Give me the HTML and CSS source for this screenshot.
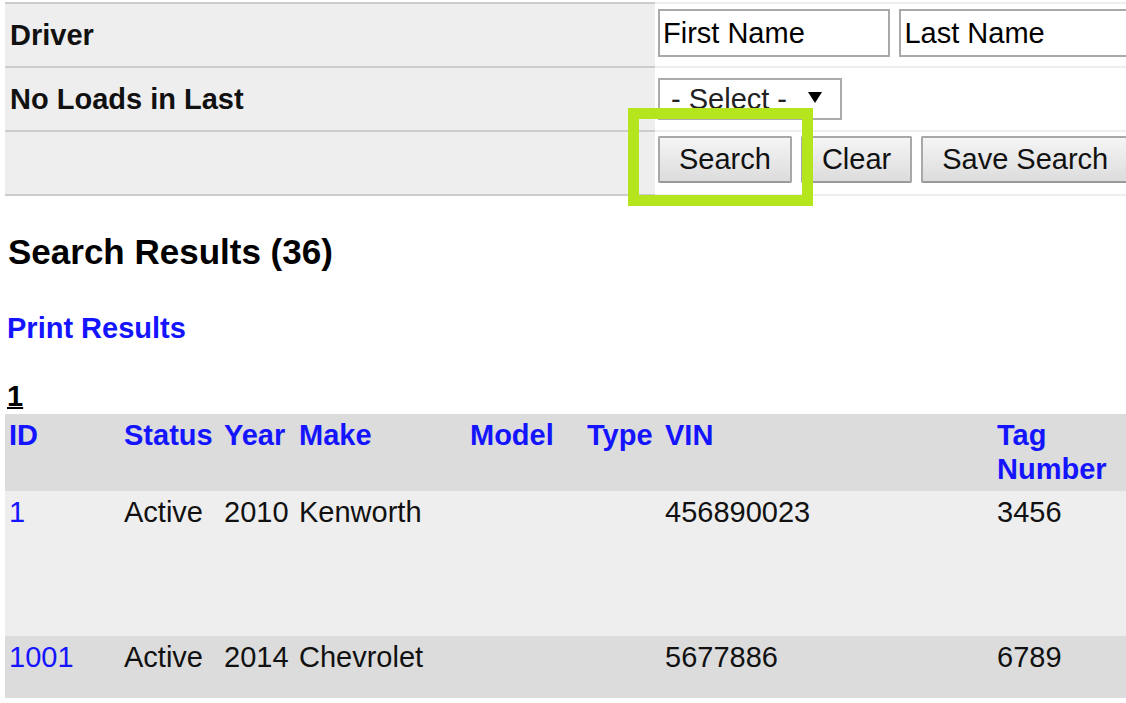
FILE: index.html
```html
<!DOCTYPE html>
<html>
<head>
    <meta charset="utf-8" />
    <title>Equipment Search</title>
    <link rel="stylesheet" href="styles.css">
</head>
<body>
    <div class="page">
        <form action="#" method="get">
            <table class="criteria">
                <tr>
                    <th>Driver</th>
                    <td>
                        <input class="txt" type="text" name="first" placeholder="First Name" />
                        <input class="txt" type="text" name="last" placeholder="Last Name" />
                    </td>
                </tr>
                <tr>
                    <th>No Loads in Last</th>
                    <td>
                        <span class="sel-wrap">
                            <select class="sel" name="period">
                                <option>- Select -</option>
                                <option>30 Days</option>
                                <option>60 Days</option>
                                <option>90 Days</option>
                            </select>
                            <span class="sel-arrow"></span>
                        </span>
                    </td>
                </tr>
                <tr>
                    <th></th>
                    <td>
                        <div class="btns">
                            <input class="btn" type="submit" value="Search" />
                            <input class="btn" type="reset" value="Clear" />
                            <input class="btn" type="button" value="Save Search" />
                        </div>
                    </td>
                </tr>
            </table>
        </form>

        <!-- marker drawn around the search button -->
        <div class="mark"></div>

        <h3 class="res-title">Search Results (36)</h3>
        <a class="print" href="#">Print Results</a>
        <div class="pager"><a href="#">1</a></div>

        <table class="results">
            <colgroup>
                <col class="c-id" />
                <col class="c-status" />
                <col class="c-year" />
                <col class="c-make" />
                <col class="c-model" />
                <col class="c-type" />
                <col class="c-vin" />
                <col class="c-tag" />
            </colgroup>
            <tr class="head">
                <th><a href="#">ID</a></th>
                <th><a href="#">Status</a></th>
                <th><a href="#">Year</a></th>
                <th><a href="#">Make</a></th>
                <th><a href="#">Model</a></th>
                <th><a href="#">Type</a></th>
                <th><a href="#">VIN</a></th>
                <th><a href="#">Tag Number</a></th>
            </tr>
            <tr class="row1">
                <td><a href="#">1</a></td>
                <td>Active</td>
                <td>2010</td>
                <td>Kenworth</td>
                <td></td>
                <td></td>
                <td>456890023</td>
                <td>3456</td>
            </tr>
            <tr class="row2">
                <td><a href="#">1001</a></td>
                <td>Active</td>
                <td>2014</td>
                <td>Chevrolet</td>
                <td></td>
                <td></td>
                <td>5677886</td>
                <td>6789</td>
            </tr>
        </table>
    </div>
</body>
</html>
```

FILE: styles.css
```css
* {
    font-family: "Liberation Sans", Arial, sans-serif;
}

html, body {
    margin: 0;
    padding: 0;
    overflow: hidden;
    background: #fff;
}

.page {
    position: relative;
    padding: 2px 0 0 5px;
    width: 1160px;
}

form {
    margin: 0;
}

.criteria {
    border-collapse: separate;
    border-spacing: 0;
    width: 1160px;
}

.criteria th {
    width: 645px;
    height: 62px;
    padding: 0 0 0 5px;
    background: #eee;
    border-bottom: 2px solid #ccc;
    text-align: left;
    vertical-align: middle;
    font-size: 29px;
    font-weight: bold;
    color: #111;
}

.criteria td {
    height: 62px;
    padding: 0 0 0 3px;
    border-bottom: 2px solid #eee;
    vertical-align: middle;
    white-space: nowrap;
}

.criteria tr:first-child th {
    border-top: 2px solid #ccc;
}

.criteria tr:first-child td {
    border-top: 2px solid #eee;
}

.txt {
    box-sizing: border-box;
    width: 232px;
    height: 48px;
    margin: 0 5px 4px 0;
    padding: 0 3px;
    border: 2px solid #a9a9a9;
    font-size: 29px;
    color: #000;
    vertical-align: middle;
}

.txt::placeholder {
    color: #000;
    opacity: 1;
}

.sel-wrap {
    position: relative;
    display: inline-block;
    vertical-align: middle;
}

.sel {
    box-sizing: border-box;
    -webkit-appearance: none;
    appearance: none;
    width: 184px;
    height: 42px;
    padding: 0 40px 0 11px;
    border: 2px solid #ababab;
    border-radius: 0;
    background: #fff;
    font-size: 29px;
    color: #222;
}

.sel-arrow {
    position: absolute;
    left: 150px;
    top: 14px;
    width: 0;
    height: 0;
    border-left: 7px solid transparent;
    border-right: 7px solid transparent;
    border-top: 11px solid #000;
    pointer-events: none;
}

.btns {
    display: flex;
    gap: 9px;
    padding-bottom: 8px;
}

.btn {
    box-sizing: border-box;
    height: 47px;
    padding: 0 19px;
    border: 2px solid #a8a8a8;
    border-bottom-color: #9a9a9a;
    border-radius: 2px;
    background: linear-gradient(#f5f5f5, #dcdcdc);
    font-size: 29px;
    color: #111;
}

.mark {
    position: absolute;
    left: 628px;
    top: 108px;
    box-sizing: border-box;
    width: 185px;
    height: 98px;
    border: 11px solid #b5e61d;
}

.res-title {
    margin: 36px 0 0 3px;
    font-size: 35px;
    line-height: 40px;
    color: #000;
}

.print {
    display: block;
    margin: 39px 0 0 2px;
    font-size: 29px;
    line-height: 34px;
    font-weight: bold;
    color: #1414ff;
    text-decoration: none;
}

.pager {
    margin: 34px 0 0 2px;
    font-size: 29px;
    line-height: 34px;
    font-weight: bold;
}

.pager a {
    color: #000;
    text-decoration-thickness: 2px;
}

.results {
    margin-top: 1px;
    width: 1145px;
    border-collapse: collapse;
    table-layout: fixed;
}

.c-id { width: 115px; }
.c-status { width: 100px; }
.c-year { width: 75px; }
.c-make { width: 171px; }
.c-model { width: 117px; }
.c-type { width: 78px; }
.c-vin { width: 332px; }
.c-tag { width: 157px; }

.results th,
.results td {
    padding: 4px 4px 4px 4px;
    text-align: left;
    vertical-align: top;
    font-size: 29px;
    line-height: 34px;
    color: #111;
}

.results th a {
    font-weight: bold;
    color: #1414ff;
    text-decoration: none;
}

.results td a {
    color: #1414ff;
    text-decoration: none;
}

.head {
    height: 77px;
    background: #dcdcdc;
}

.row1 {
    height: 145px;
    background: #eee;
}

.row2 {
    height: 62px;
    background: #dcdcdc;
}
```
